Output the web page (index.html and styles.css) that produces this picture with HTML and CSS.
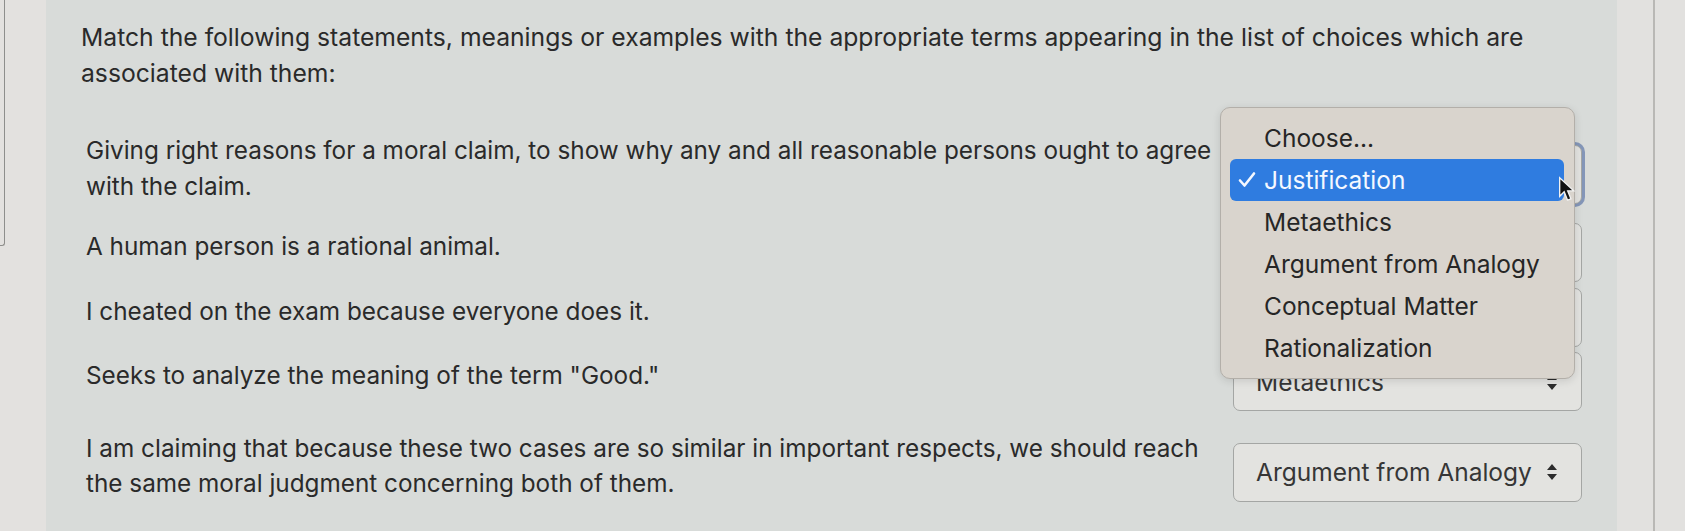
FILE: index.html
```html
<!DOCTYPE html>
<html lang="en">
<head>
<meta charset="utf-8">
<title>Matching question</title>
<link rel="stylesheet" href="styles.css">
</head>
<body>
<div class="page">
  <div class="left-strip"><div class="left-box"></div></div>
  <main class="main">
    <p class="prompt">Match the following statements, meanings or examples with the appropriate terms appearing in the list of choices which are associated with them:</p>
    <div class="q-list">
      <div class="q-row q-row-first">
        <div class="q-text">Giving right reasons for a moral claim, to show why any and all reasonable persons ought to agree with the claim.</div>
        <div class="select-wrap">
          <div class="select focused"><span>Justification</span><svg class="arrows" viewBox="0 0 12 18" width="12" height="18"><path d="M6 1 L11 7 L1 7 Z M6 17 L11 11 L1 11 Z"/></svg></div>
          <div class="menu">
            <div class="menu-item">Choose...</div>
            <div class="menu-item active"><svg class="check" viewBox="0 0 18 18" width="18" height="18"><path d="M2 9.5 L6.5 14.5 L16 2.5"/></svg>Justification</div>
            <div class="menu-item">Metaethics</div>
            <div class="menu-item">Argument from Analogy</div>
            <div class="menu-item">Conceptual Matter</div>
            <div class="menu-item">Rationalization</div>
            <svg class="cursor" viewBox="0 0 16 24" width="18" height="27"><path d="M1.5 1.5 L1.5 18 L5.5 14 L8.5 21.5 L11.5 20.3 L8.6 13.2 L14 13.2 Z"/></svg>
          </div>
        </div>
      </div>
      <div class="q-row">
        <div class="q-text">A human person is a rational animal.</div>
        <div class="select-wrap"><div class="select"><span>Conceptual Matter</span><svg class="arrows" viewBox="0 0 12 18" width="12" height="18"><path d="M6 1 L11 7 L1 7 Z M6 17 L11 11 L1 11 Z"/></svg></div></div>
      </div>
      <div class="q-row">
        <div class="q-text">I cheated on the exam because everyone does it.</div>
        <div class="select-wrap"><div class="select"><span>Rationalization</span><svg class="arrows" viewBox="0 0 12 18" width="12" height="18"><path d="M6 1 L11 7 L1 7 Z M6 17 L11 11 L1 11 Z"/></svg></div></div>
      </div>
      <div class="q-row">
        <div class="q-text">Seeks to analyze the meaning of the term "Good."</div>
        <div class="select-wrap"><div class="select"><span>Metaethics</span><svg class="arrows" viewBox="0 0 12 18" width="12" height="18"><path d="M6 1 L11 7 L1 7 Z M6 17 L11 11 L1 11 Z"/></svg></div></div>
      </div>
      <div class="q-row q-row-last">
        <div class="q-text">I am claiming that because these two cases are so similar in important respects, we should reach the same moral judgment concerning both of them.</div>
        <div class="select-wrap"><div class="select"><span>Argument from Analogy</span><svg class="arrows" viewBox="0 0 12 18" width="12" height="18"><path d="M6 1 L11 7 L1 7 Z M6 17 L11 11 L1 11 Z"/></svg></div></div>
      </div>
    </div>
  </main>
  <div class="right-strip"><div class="right-line"></div></div>
</div>
</body>
</html>
```

FILE: styles.css
```css
html, body {
  margin: 0;
  padding: 0;
}
body {
  width: 1685px;
  height: 531px;
  overflow: hidden;
  background: #d8dbd9;
  color: #2a2a2a;
  font-family: Inter, "Noto Sans", sans-serif;
}
.page {
  display: flex;
  height: 531px;
}
.left-strip {
  width: 46px;
  flex: none;
  background: #e3e1df;
  position: relative;
}
.left-box {
  width: 4px;
  height: 245px;
  border-right: 1.5px solid #8e8e8c;
  border-bottom: 1.5px solid #8e8e8c;
  border-bottom-right-radius: 3px;
}
.main {
  flex: 1;
  padding: 20px 35px 0 35px;
  min-width: 0;
}
.prompt {
  margin: 0;
  font-size: 24.7px;
  line-height: 35.5px;
}
.q-list {
  margin-top: 36px;
  display: flex;
  flex-direction: column;
  gap: 5px;
}
.q-row {
  display: grid;
  grid-template-columns: 1fr 349px;
  column-gap: 10px;
  align-items: center;
}
.q-row-first {
  margin-bottom: -4px;
}
.q-row-last {
  margin-top: 8px;
}
.q-text {
  padding: 6px 0 18px 5px;
  font-size: 24.3px;
  line-height: 35.5px;
}
.select-wrap {
  position: relative;
}
.select {
  height: 59px;
  box-sizing: border-box;
  border: 1.5px solid #a4a6a4;
  border-radius: 7px;
  background: #e3e3e0;
  display: flex;
  align-items: center;
  justify-content: space-between;
  padding: 0 23px 0 22px;
  font-size: 24.5px;
  color: #363636;
}
.select.focused {
  box-shadow: 0 0 0 3px #8496b8;
}
.arrows {
  fill: #2c2c2c;
  flex: none;
}
.menu {
  position: absolute;
  left: -13px;
  top: -38px;
  width: 355px;
  box-sizing: border-box;
  padding: 9px 10px 9px 9px;
  background: #d9d4cd;
  border: 1px solid #b3afa9;
  border-radius: 10px;
  box-shadow: 0 2px 8px rgba(0, 0, 0, 0.12);
  font-size: 24.5px;
  color: #262626;
  z-index: 2;
}
.menu-item {
  height: 42px;
  display: flex;
  align-items: center;
  padding-left: 34px;
  position: relative;
  border-radius: 6px;
}
.menu-item.active {
  background: #2f7ce0;
  color: #f4f8ff;
}
.check {
  position: absolute;
  left: 8px;
  top: 12px;
  fill: none;
  stroke: #f4f8ff;
  stroke-width: 2.6;
  stroke-linecap: round;
  stroke-linejoin: round;
}
.cursor {
  position: absolute;
  left: 337px;
  top: 68px;
  fill: #111;
  stroke: #f2f2f2;
  stroke-width: 1.2;
}
.right-strip {
  width: 68px;
  flex: none;
  background: #e2e1df;
  display: flex;
  justify-content: flex-start;
}
.right-line {
  margin-left: 36px;
  width: 1.5px;
  background: #b9b8b5;
  height: 531px;
}
```
